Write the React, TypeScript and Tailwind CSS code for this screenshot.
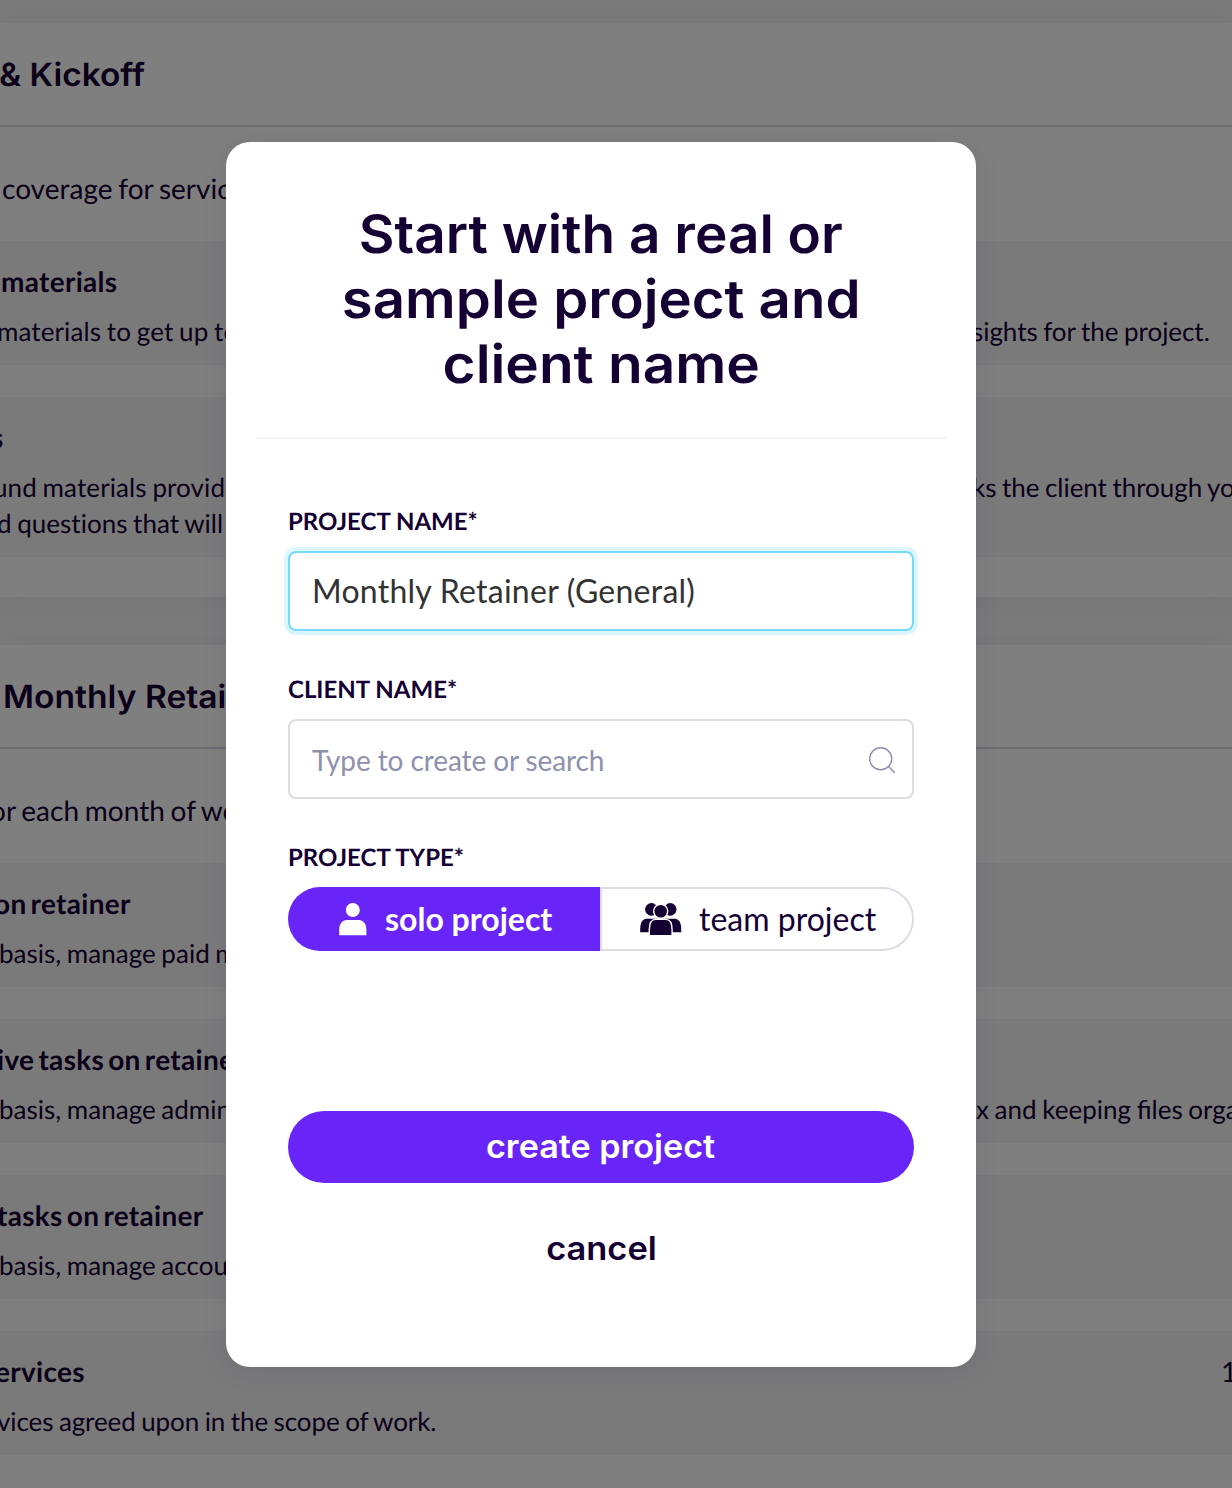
import React from "react";

type Line = { left: string; leftClass: string; right?: string; rightClass?: string };
type Task = { title: string; titleClass: string; value?: string; lines: Line[] };
type Phase = {
  title: string;
  titleClass: string;
  summary: string;
  summaryClass: string;
  tasks: Task[];
};

const phases: Phase[] = [
  {
    title: "& Kickoff",
    titleClass: "ml-[-1px] scale-x-[1.045]",
    summary: "coverage for services",
    summaryClass: "ml-[2px]",
    tasks: [
      {
        title: "materials",
        titleClass: "ml-px",
        lines: [
          {
            left: "materials to get up to",
            leftClass: "ml-[-3px] tracking-[0.1px]",
            right: "sights for the project.",
            rightClass: "ml-[972px] tracking-[-0.05px]",
          },
        ],
      },
      {
        title: "s",
        titleClass: "ml-[-9px]",
        lines: [
          {
            left: "und materials provide",
            leftClass: "ml-[-7px] tracking-[0.1px]",
            right: "ks the client through your",
            rightClass: "ml-[972px] tracking-[-0.05px]",
          },
          { left: "d questions that will", leftClass: "ml-[-3px]" },
        ],
      },
    ],
  },
  {
    title: "Monthly Retainer",
    titleClass: "ml-[3px] scale-x-[1.05]",
    summary: "or each month of work",
    summaryClass: "ml-[-10px]",
    tasks: [
      {
        title: "on retainer",
        titleClass: "ml-[-6px]",
        lines: [{ left: "basis, manage paid me", leftClass: "ml-[-1px]" }],
      },
      {
        title: "ive tasks on retainer",
        titleClass: "ml-[-3px]",
        lines: [
          {
            left: "basis, manage admin",
            leftClass: "ml-[-1px]",
            right: "x and keeping files organized",
            rightClass: "ml-[976px] tracking-normal",
          },
        ],
      },
      {
        title: "tasks on retainer",
        titleClass: "ml-[-3px]",
        lines: [{ left: "basis, manage accoun", leftClass: "ml-[-1px]" }],
      },
      {
        title: "ervices",
        titleClass: "ml-[-5px]",
        value: "1",
        lines: [{ left: "vices agreed upon in the scope of work.", leftClass: "ml-[-3px] tracking-[-0.1px]" }],
      },
    ],
  },
];

function TaskRow({ task }: { task: Task }) {
  return (
    <div className="bg-[#f5f5f6] pt-[22px] pb-4">
      <div className="mb-[14px] grid h-9 overflow-hidden text-[28px] leading-9 whitespace-nowrap">
        <span className={`col-start-1 row-start-1 font-bold tracking-[0.3px] [word-spacing:-3px] ${task.titleClass}`}>
          {task.title}
        </span>
        {task.value && <span className="col-start-1 row-start-1 ml-[1221px]">{task.value}</span>}
      </div>
      {task.lines.map((line) => (
        <div
          key={line.left}
          className="grid h-9 overflow-hidden text-[26px] leading-9 whitespace-nowrap [word-spacing:-1px]"
        >
          <span className={`col-start-1 row-start-1 ${line.leftClass}`}>{line.left}</span>
          {line.right && <span className={`col-start-1 row-start-1 ${line.rightClass}`}>{line.right}</span>}
        </div>
      ))}
    </div>
  );
}

function PhaseCard({ phase }: { phase: Phase }) {
  return (
    <section className="bg-white pb-10 shadow-[0_4px_24px_rgba(40,30,90,0.05)]">
      <div className="flex h-[104px] items-center border-b-2 border-[#dcdbe5] pt-0.5">
        <h2 className={`origin-left font-[Inter] text-[32px] font-semibold whitespace-nowrap ${phase.titleClass}`}>
          {phase.title}
        </h2>
      </div>
      <p
        className={`h-[114px] pt-[43px] text-[28px] leading-9 whitespace-nowrap [word-spacing:-1.4px] ${phase.summaryClass}`}
      >
        {phase.summary}
      </p>
      <div className="flex flex-col gap-8">
        {phase.tasks.map((task) => (
          <TaskRow key={task.title} task={task} />
        ))}
      </div>
    </section>
  );
}

function SoloIcon() {
  return (
    <svg width="28" height="34" viewBox="0 0 28 34" fill="currentColor">
      <circle cx="13.8" cy="8" r="7" />
      <path d="M0.2 33.2v-5.4c0-6 3.2-9.8 7.6-9.8h12c4.400 0 7.600 3.800 7.600 9.800v5.400z" />
    </svg>
  );
}

function TeamIcon() {
  return (
    <svg width="42" height="34" viewBox="0 0 42 34" fill="currentColor">
      <circle cx="11.4" cy="7.400" r="6.300" />
      <circle cx="30.200" cy="7.400" r="6.300" />
      <path d="M0.200 30.200v-3c0-7 2.800-10.400 6.200-10.400h28.600c3.400 0 6.200 3.400 6.200 10.400v3z" />
      <g stroke="white" strokeWidth="1.400">
        <path d="M9.300 33.800v-6c0-6.400 2.400-10.400 6.400-10.400h10c4 0 6.400 4 6.400 10.400v6z" />
        <circle cx="20.700" cy="9.200" r="7" />
      </g>
    </svg>
  );
}

function SearchIcon() {
  return (
    <svg className="mt-0.5" width="28" height="28" viewBox="0 0 28 28" fill="none" stroke="#8b8ca9" strokeWidth="1.400">
      <circle cx="12.700" cy="12.700" r="11" />
      <path d="M20.500 20.500l6.200 6.200" />
    </svg>
  );
}

function Label({ children }: { children: React.ReactNode }) {
  return <label className="mb-[14px] block pt-px text-2xl leading-[30px] font-bold">{children}</label>;
}

function ProjectDialog() {
  return (
    <div
      role="dialog"
      className="mt-[142px] ml-[226px] h-[1225px] w-[750px] rounded-3xl bg-white px-[30px] pt-[60px] shadow-[0_4px_24px_rgba(40,30,90,0.1)]"
    >
      <h1 className="flex flex-col items-center border-b-2 border-[#f4f4f5] pb-10 font-[Inter] text-[53px] leading-[65px] font-semibold whitespace-nowrap">
        <span className="scale-x-[1.035]">Start with a real or</span>
        <span className="scale-x-[1.062]">sample project and</span>
        <span className="scale-x-[1.07]">client name</span>
      </h1>
      <div className="px-8 pt-[67px]">
        <Label>PROJECT NAME*</Label>
        <input
          className="block h-20 w-full rounded-lg border-2 border-[#74d9fa] px-[22px] pb-0.5 text-[32px] tracking-[0.25px] text-[#333] ring-4 ring-[#dcf6fe] outline-none"
          defaultValue="Monthly Retainer (General)"
        />
        <div className="mt-[43px]">
          <Label>CLIENT NAME*</Label>
          <div className="flex h-20 items-center rounded-lg border-2 border-[#dddce4] pr-4 pl-[22px]">
            <input
              className="min-w-0 flex-1 pt-0.5 text-[28px] tracking-[-0.1px] outline-none placeholder:text-[#8f90ad]"
              placeholder="Type to create or search"
            />
            <SearchIcon />
          </div>
        </div>
        <div className="mt-[43px]">
          <Label>PROJECT TYPE*</Label>
          <div className="flex h-16 text-[32px]">
            <button className="flex w-[312px] items-center rounded-l-full bg-[#6925f8] pl-[51px] font-bold text-white">
              <SoloIcon />
              <span className="ml-[18px]">solo project</span>
            </button>
            <button className="flex flex-1 items-center rounded-r-full border-2 border-[#dddce4] pl-[38px]">
              <TeamIcon />
              <span className="ml-[17px]">team project</span>
            </button>
          </div>
        </div>
        <button className="mt-40 block h-[72px] w-full rounded-full bg-[#6925f8] font-[Inter] text-[32px] font-semibold text-white">
          <span className="inline-block scale-x-[1.065]">create project</span>
        </button>
        <button className="mx-auto mt-[46px] block scale-x-[1.075] font-[Inter] text-[32px] leading-10 font-semibold">
          cancel
        </button>
      </div>
    </div>
  );
}

export default function App() {
  return (
    <div className="relative h-[1488px] w-[1232px] overflow-hidden bg-[#f5f5f6] font-[Lato] tracking-[0.01px] text-[#140033] [text-rendering:geometricPrecision]">
      <main className="flex flex-col gap-12 pt-[23px]">
        {phases.map((phase) => (
          <PhaseCard key={phase.title} phase={phase} />
        ))}
      </main>
      <div className="absolute inset-0 flex items-start bg-black/50">
        <ProjectDialog />
      </div>
    </div>
  );
}
